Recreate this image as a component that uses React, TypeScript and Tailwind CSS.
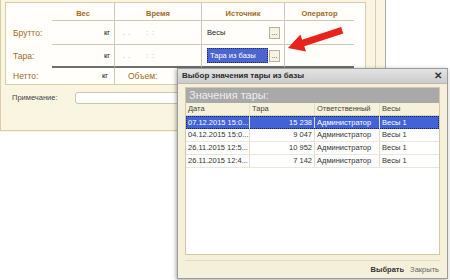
import React from 'react';

// ── Tare rows shown in the picker ─────────────────────────────────────────
const TARE_ROWS = [
  { date: '07.12.2015 15:0...', tare: '15 238', user: 'Администратор', scale: 'Весы 1' },
  { date: '04.12.2015 15:0...', tare: '9 047', user: 'Администратор', scale: 'Весы 1' },
  { date: '26.11.2015 12:5...', tare: '10 952', user: 'Администратор', scale: 'Весы 1' },
  { date: '26.11.2015 12:4...', tare: '7 142', user: 'Администратор', scale: 'Весы 1' },
];

function DotsButton() {
  return (
    <div className="w-[11px] h-[12px] flex items-end justify-center pb-[2px] bg-[#f7f3e3] border border-[#b9b29a] text-[7px] leading-none text-[#333]">
      ...
    </div>
  );
}

function TimeMask() {
  return (
    <div className="flex items-center text-[#a7a2d2] text-[7.5px]">
      <span className="ml-[8px]">.</span>
      <span className="ml-[3px]">.</span>
      <span className="ml-[16px]">:</span>
      <span className="ml-[4px]">:</span>
    </div>
  );
}

// ── Background weighing form ──────────────────────────────────────────────
function WeighForm() {
  const head = 'flex items-center justify-center pt-[5px] font-bold text-[#a06a22] border-b border-[#cfc8b4]';
  const label = 'flex items-center pl-[7px] text-[#a06a22] text-[8.5px]';
  return (
    <div className="flex w-[386px] h-[132px] bg-[#f9f5e1] border-r border-[#ababab]">
      <div className="w-[376px] h-[131px] flex flex-col border-l border-r border-b border-[#d8ceac]">
        {/* inner white panel */}
        <div className="ml-[4px] mt-[2px] w-[361px] h-[83px] bg-[#fffefa] border border-[#d8ceac] grid grid-cols-[46px_63px_87px_83px_69px_1fr] grid-rows-[18px_24px_23px_16px]">
          {/* header */}
          <div />
          <div className={head + ' border-r'}>Вес</div>
          <div className={head + ' border-r'}>Время</div>
          <div className={head + ' border-r'}>Источник</div>
          <div className={head}>Оператор</div>
          <div />

          {/* Брутто */}
          <div className={label}>Брутто:</div>
          <div className="flex items-center justify-end pr-[4px] border-r border-b border-[#cfc8b4] text-[#111]">кг</div>
          <div className="flex items-center border-r border-b border-[#cfc8b4]"><TimeMask /></div>
          <div className="flex items-center justify-between pl-[5px] pr-[4px] border-r border-b border-[#cfc8b4]">
            <span className="text-[#222]">Весы</span>
            <DotsButton />
          </div>
          <div className="border-b border-[#cfc8b4]" />
          <div />

          {/* Тара */}
          <div className={label}>Тара:</div>
          <div className="flex items-center justify-end pr-[4px] border-r border-[#cfc8b4] border-b-2 border-b-[#6f6f6f] text-[#111]">кг</div>
          <div className="flex items-center border-r border-[#cfc8b4] border-b-2 border-b-[#6f6f6f]"><TimeMask /></div>
          <div className="flex items-center justify-between pl-[5px] pr-[4px] border-r border-[#cfc8b4] border-b-2 border-b-[#6f6f6f]">
            <div className="w-[61px] h-[15px] flex items-center pl-[2px] bg-[#4d65cf] border border-dotted border-[#1d2a66] text-white">
              Тара из базы
            </div>
            <DotsButton />
          </div>
          <div className="border-b-2 border-b-[#6f6f6f]" />
          <div />

          {/* Нетто */}
          <div className={label}>Нетто:</div>
          <div className="flex items-center justify-end pr-[6px] border-r border-[#cfc8b4] text-[#111]">кг</div>
          <div className="col-span-4 flex items-center pl-[13px] text-[#a06a22] text-[8.5px]">Объем:</div>
        </div>

        {/* Примечание */}
        <div className="flex items-center h-[12px] mt-[7px]">
          <span className="ml-[11px] w-[63px] text-[#444]">Примечание:</span>
          <div className="flex-1 h-[12px] bg-white border border-[#cbc4ae] rounded-l-[3px]" />
        </div>
      </div>
    </div>
  );
}

// ── Picker dialog ─────────────────────────────────────────────────────────
function TareDialog() {
  const cell = 'flex items-center px-[2px] border-r border-[#e2ddcc] whitespace-nowrap overflow-hidden';
  return (
    <div className="absolute left-[177px] top-[68px] w-[271px] h-[211px] flex flex-col bg-[#f4f0da] border border-[#9c9c9c] shadow-[-1px_1px_4px_rgba(0,0,0,0.35)]">
      <div className="h-[15px] flex items-center justify-between pl-[4px] pr-[5px] bg-gradient-to-b from-[#e3e3e3] to-[#cccccc] border-b border-[#b7b7b7]">
        <span className="font-bold text-[8px] text-[#2a2a2a]">Выбор значения тары из базы</span>
        <span className="font-bold text-[10px] text-[#333]">✕</span>
      </div>

      <div className="flex-1 flex flex-col pl-[7px] pr-[7px] pt-[3px]">
        <div className="h-[168px] flex flex-col bg-white border border-[#d3c9a9]">
          <div className="h-[15px] flex items-center pl-[3px] bg-[#a9a9a9] text-[11px] text-[#eeeeee]">Значения тары:</div>
          <div className="h-[13px] grid grid-cols-[64px_65px_65px_1fr] bg-[#f6f1da] border-b border-[#d9d2bb] text-[#444]">
            <div className={cell + ' border-[#d9d2bb]'}>Дата</div>
            <div className={cell + ' border-[#d9d2bb]'}>Тара</div>
            <div className={cell + ' border-[#d9d2bb]'}>Ответственный</div>
            <div className="flex items-center px-[2px]">Весы</div>
          </div>
          {TARE_ROWS.map((r, i) => (
            <div
              key={i}
              className={
                i === 0
                  ? 'h-[13px] grid grid-cols-[64px_65px_65px_1fr] bg-[#4263d5] text-white outline outline-1 outline-dotted outline-[#18225a] -outline-offset-1'
                  : 'h-[13px] grid grid-cols-[64px_65px_65px_1fr] border-b border-[#ebe7da] text-[#333]'
              }
            >
              <div className={cell}>{r.date}</div>
              <div className={cell + ' justify-end'}>{r.tare}</div>
              <div className={cell}>{r.user}</div>
              <div className="flex items-center px-[2px]">{r.scale}</div>
            </div>
          ))}
          <div className="flex-1" />
        </div>

        <div className="mt-[5px] flex-1 flex items-center justify-end gap-[6px] pr-[1px] border-t border-[#e3dcc1]">
          <span className="font-bold text-[#333]">Выбрать</span>
          <span className="text-[#666]">Закрыть</span>
        </div>
      </div>
    </div>
  );
}

// ── Red pointer arrow drawn over the form ─────────────────────────────────
function RedArrow() {
  return (
    <svg className="absolute inset-0 pointer-events-none" width={450} height={280} viewBox="0 0 450 280">
      <polygon
        points="288,48 306,51.6 304.3,46.3 343.3,33.6 341.1,27 302.1,39.7 300.4,34.5"
        fill="#e8231b"
      />
    </svg>
  );
}

export default function App() {
  return (
    <div className="relative w-[450px] h-[280px] overflow-hidden bg-white font-['Liberation_Sans',Arial,sans-serif] text-[7.5px] leading-none text-[#333]">
      <WeighForm />
      <TareDialog />
      <RedArrow />
    </div>
  );
}
